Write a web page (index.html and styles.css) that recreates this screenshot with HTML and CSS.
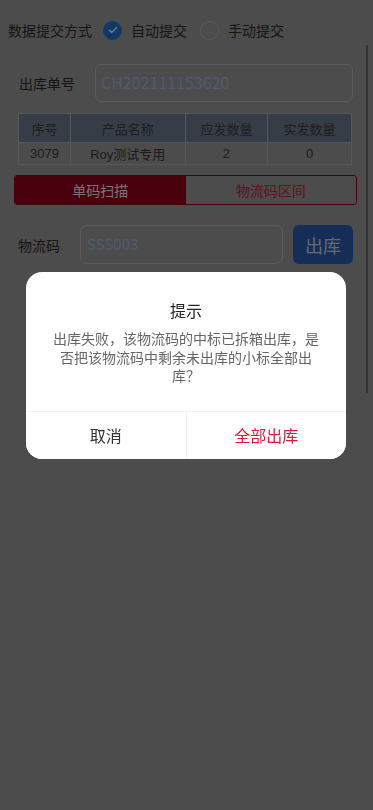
FILE: index.html
```html
<!DOCTYPE html>
<html lang="zh-CN">
<head>
    <meta charset="UTF-8">
    <meta name="viewport" content="width=device-width, initial-scale=1.0">
    <title>出库扫描</title>
    <link rel="stylesheet" href="styles.css">
</head>
<body>
    <div class="page">
        <div class="mode-row">
            <span class="mode-label">数据提交方式</span>
            <label class="radio checked"><span class="radio-icon"><svg viewBox="0 0 20 20" width="12" height="12"><path d="M4 10.5l4 3.5 8-8" fill="none" stroke="#fff" stroke-width="2.2" stroke-linecap="round" stroke-linejoin="round"/></svg></span>自动提交</label>
            <label class="radio"><span class="radio-icon"></span>手动提交</label>
        </div>

        <div class="field-row order-row">
            <span class="field-label">出库单号</span>
            <div class="field-input">CH202111153620</div>
        </div>

        <table class="goods">
            <thead>
                <tr><th class="c1">序号</th><th class="c2">产品名称</th><th class="c3">应发数量</th><th class="c4">实发数量</th></tr>
            </thead>
            <tbody>
                <tr><td>3079</td><td>Roy测试专用</td><td>2</td><td>0</td></tr>
            </tbody>
        </table>

        <div class="tabs">
            <div class="tab active">单码扫描</div>
            <div class="tab">物流码区间</div>
        </div>

        <div class="field-row code-row">
            <span class="field-label">物流码</span>
            <div class="field-input code-input">SSS003</div>
            <button class="out-btn">出库</button>
        </div>
    </div>

    <div class="scrollbar"></div>
    <div class="overlay"></div>

    <div class="dialog">
        <div class="dialog-title">提示</div>
        <div class="dialog-msg">出库失败，该物流码的中标已拆箱出库，是否把该物流码中剩余未出库的小标全部出库？</div>
        <div class="dialog-footer">
            <button class="dialog-btn cancel">取消</button>
            <button class="dialog-btn confirm">全部出库</button>
        </div>
    </div>
</body>
</html>
```

FILE: styles.css
```css
* {
    box-sizing: border-box;
    margin: 0;
    padding: 0;
}
body {
    font-family: "Noto Sans CJK SC", "Liberation Sans", sans-serif;
    background-color: #989898;
    color: #2a2a2a;
    width: 373px;
    height: 810px;
    overflow: hidden;
}
.page {
    padding-top: 20px;
}
.mode-row {
    display: flex;
    align-items: center;
    height: 20px;
    padding-left: 8px;
    font-size: 14px;
}
.mode-label {
    margin-right: 11px;
}
.radio {
    display: flex;
    align-items: center;
    margin-right: 13px;
    color: #2a2a2a;
}
.radio-icon {
    width: 19px;
    height: 19px;
    border-radius: 50%;
    border: 1px solid #b4b4b4;
    margin-right: 9px;
    display: flex;
    align-items: center;
    justify-content: center;
}
.radio.checked .radio-icon {
    background-color: #2472cc;
    border-color: #2472cc;
}
.field-row {
    display: flex;
    align-items: center;
}
.order-row {
    margin-top: 24px;
    padding-left: 19px;
}
.field-label {
    font-size: 14px;
    width: 76px;
}
.field-input {
    height: 38px;
    border: 1px solid #b8b8b8;
    border-radius: 7px;
    padding-left: 5px;
    font-size: 16px;
    line-height: 35px;
    color: #9ab6e2;
    width: 258px;
}
.goods {
    margin: 11px 0 0 18px;
    width: 334px;
    border-collapse: collapse;
    font-size: 13px;
    text-align: center;
}
.goods th {
    background-color: #6e7a8e;
    font-weight: normal;
    height: 29px;
    color: #3c3c3c;
    border: 1px solid #b0b0b0;
}
.goods td {
    height: 22px;
    border: 1px solid #b0b0b0;
    color: #383838;
    font-family: "Liberation Sans", "Noto Sans CJK SC", sans-serif;
}
.goods .c1 { width: 52px; }
.goods .c2 { width: 115px; }
.goods .c3 { width: 83px; }
.goods .c4 { width: 84px; }
.tabs {
    display: flex;
    margin: 10px 16px 0 14px;
    height: 30px;
    border: 1px solid #900018;
    border-radius: 3px;
    overflow: hidden;
    font-size: 14px;
}
.tab {
    flex: 1;
    display: flex;
    align-items: center;
    justify-content: center;
    color: #b02a44;
}
.tab.active {
    background-color: #900018;
    color: #f0e4e4;
}
.code-row {
    margin-top: 20px;
    padding-left: 18px;
}
.code-row .field-label {
    width: 62px;
}
.code-input {
    width: 203px;
    height: 39px;
    font-size: 15px;
    padding-left: 6px;
}
.out-btn {
    margin-left: 10px;
    width: 60px;
    height: 39px;
    border: none;
    border-radius: 6px;
    background-color: #2c5cae;
    color: #c8d4ea;
    font-family: inherit;
    font-size: 18px;
}
.scrollbar {
    position: absolute;
    left: 366px;
    top: 45px;
    width: 2px;
    height: 348px;
    background-color: #666;
}
.overlay {
    position: fixed;
    inset: 0;
    background-color: rgba(0, 0, 0, 0.5);
}
.dialog {
    position: fixed;
    left: 26px;
    top: 272px;
    width: 320px;
    background: #fff;
    border-radius: 16px;
    overflow: hidden;
    text-align: center;
}
.dialog-title {
    padding-top: 26px;
    font-size: 16px;
    line-height: 24px;
    color: #222;
}
.dialog-msg {
    padding: 7px 26px 26px;
    font-size: 14px;
    line-height: 18.5px;
    color: #666;
}
.dialog-footer {
    display: flex;
    border-top: 1px solid #f2f2f2;
}
.dialog-btn {
    flex: 1;
    height: 47px;
    border: none;
    background: #fff;
    font-family: inherit;
    font-size: 16px;
    color: #333;
}
.dialog-btn.confirm {
    color: #e0193a;
    border-left: 1px solid #f2f2f2;
}
```
